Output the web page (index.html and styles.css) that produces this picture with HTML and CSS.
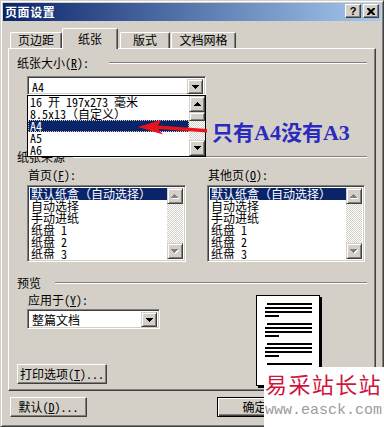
FILE: index.html
```html
<!DOCTYPE html>
<html lang="zh-CN">
<head>
<meta charset="utf-8">
<title>页面设置</title>
<link rel="stylesheet" href="styles.css">
</head>
<body>
<div class="window">
  <div class="titlebar">
    <span class="title">页面设置</span>
    <div class="tb-btns">
      <span class="tb-btn">?</span>
      <span class="tb-btn"><svg width="8" height="7" viewBox="0 0 8 7"><path d="M0 0h2l2 2 2-2h2v1L5.5 3.5 8 6v1H6L4 5 2 7H0V6l2.5-2.5L0 1z"/></svg></span>
    </div>
  </div>
  <div class="main">
    <div class="tabs">
      <div class="tab t1">页边距</div>
      <div class="tab sel t2">纸张</div>
      <div class="tab t3">版式</div>
      <div class="tab t4">文档网格</div>
    </div>
    <div class="panel">
      <div class="group g1"><span class="glabel">纸张大小(<u>R</u>):</span><span class="gline"></span></div>
      <div class="combo c1">
        <span class="ctext">A4</span>
        <span class="sbtn"><svg width="7" height="4"><path d="M0 0h7v1H0zM1 1h5v1H1zM2 2h3v1H2zM3 3h1v1H3z"/></svg></span>
      </div>
      <div class="group g2"><span class="glabel">纸张来源</span><span class="gline"></span></div>
      <div class="sources">
        <div class="src s1">
          <div class="lbl">首页(<u>F</u>):</div>
          <div class="listbox">
            <div class="items">
              <div class="item sel">默认纸盒（自动选择）</div>
              <div class="item">自动选择</div>
              <div class="item">手动进纸</div>
              <div class="item">纸盘 1</div>
              <div class="item">纸盘 2</div>
              <div class="item">纸盘 3</div>
            </div>
            <div class="vscroll">
              <span class="sbtn"><svg width="8" height="5"><path fill="#fff" d="M4 1h1v1H4zM3 2h3v1H3zM2 3h5v1H2zM1 4h7v1H1z"/><path fill="#808080" d="M3 0h1v1H3zM2 1h3v1H2zM1 2h5v1H1zM0 3h7v1H0z"/></svg></span>
              <span class="track"></span>
              <span class="sbtn"><svg width="8" height="5"><path fill="#fff" d="M1 1h7v1H1zM2 2h5v1H2zM3 3h3v1H3zM4 4h1v1H4z"/><path fill="#808080" d="M0 0h7v1H0zM1 1h5v1H1zM2 2h3v1H2zM3 3h1v1H3z"/></svg></span>
            </div>
          </div>
        </div>
        <div class="src s2">
          <div class="lbl">其他页(<u>O</u>):</div>
          <div class="listbox">
            <div class="items">
              <div class="item sel">默认纸盒（自动选择）</div>
              <div class="item">自动选择</div>
              <div class="item">手动进纸</div>
              <div class="item">纸盘 1</div>
              <div class="item">纸盘 2</div>
              <div class="item">纸盘 3</div>
            </div>
            <div class="vscroll">
              <span class="sbtn"><svg width="8" height="5"><path fill="#fff" d="M4 1h1v1H4zM3 2h3v1H3zM2 3h5v1H2zM1 4h7v1H1z"/><path fill="#808080" d="M3 0h1v1H3zM2 1h3v1H2zM1 2h5v1H1zM0 3h7v1H0z"/></svg></span>
              <span class="track"></span>
              <span class="sbtn"><svg width="8" height="5"><path fill="#fff" d="M1 1h7v1H1zM2 2h5v1H2zM3 3h3v1H3zM4 4h1v1H4z"/><path fill="#808080" d="M0 0h7v1H0zM1 1h5v1H1zM2 2h3v1H2zM3 3h1v1H3z"/></svg></span>
            </div>
          </div>
        </div>
      </div>
      <div class="group g3"><span class="glabel">预览</span><span class="gline"></span></div>
      <div class="preview-row">
        <div class="pleft">
          <div class="lbl">应用于(<u>Y</u>):</div>
          <div class="combo c2">
            <span class="ctext">整篇文档</span>
            <span class="sbtn"><svg width="7" height="4"><path d="M0 0h7v1H0zM1 1h5v1H1zM2 2h3v1H2zM3 3h1v1H3z"/></svg></span>
          </div>
          <div class="btn pbtn">打印选项(<u>T</u>)...</div>
        </div>
        <div class="page">
          <div class="para"><i class="ln first"></i><i class="ln"></i><i class="ln"></i><i class="ln short"></i></div>
          <div class="para"><i class="ln first"></i><i class="ln"></i><i class="ln"></i><i class="ln short"></i></div>
          <div class="para"><i class="ln first"></i><i class="ln"></i><i class="ln"></i><i class="ln short"></i></div>
          <div class="para"><i class="ln first"></i><i class="ln"></i><i class="ln"></i><i class="ln short"></i></div>
        </div>
      </div>
    </div>
    <div class="footer">
      <div class="btn fbtn">默认(<u>D</u>)...</div>
      <div class="btn fbtn ok">确定</div>
      <div class="btn fbtn cancel">取消</div>
    </div>
  </div>

  <div class="dropdown">
    <div class="ditems">
      <div class="item">16 开 197x273 毫米</div>
      <div class="item">8.5x13（自定义）</div>
      <div class="item sel focus">A4</div>
      <div class="item">A5</div>
      <div class="item">A6</div>
    </div>
    <div class="vscroll">
      <span class="sbtn"><svg width="7" height="4"><path d="M3 0h1v1H3zM2 1h3v1H2zM1 2h5v1H1zM0 3h7v1H0z"/></svg></span>
      <span class="thumb"></span>
      <span class="track"></span>
      <span class="sbtn"><svg width="7" height="4"><path d="M0 0h7v1H0zM1 1h5v1H1zM2 2h3v1H2zM3 3h1v1H3z"/></svg></span>
    </div>
  </div>

  <svg class="arrow" width="384" height="427" viewBox="0 0 384 427">
    <path fill="#e8141c" d="M138 127 L161 120 L158 125.5 L207 129 L207 132.5 L158 129 L163 134.5 Z"/>
  </svg>
  <div class="note">只有<span class="lat">A4</span>没有<span class="lat">A3</span></div>

  <div class="watermark">
    <div class="wm1">易采站长站</div>
    <div class="wm2">www.easck.com</div>
  </div>
</div>
</body>
</html>
```

FILE: styles.css
```css
* { box-sizing: border-box; }
html, body { margin: 0; padding: 0; }
body {
  width: 384px;
  height: 427px;
  overflow: hidden;
  background: #d4d0c8;
  font-family: "Noto Sans Mono CJK SC", "Noto Sans CJK SC", sans-serif;
  font-size: 12px;
  line-height: 14px;
  color: #000;
}
u { text-decoration: underline; text-underline-offset: 1px; }

.window {
  position: relative;
  width: 384px;
  height: 427px;
  background: #d4d0c8;
  border: 1px solid;
  border-color: #d4d0c8 #404040 #404040 #d4d0c8;
  box-shadow: inset 1px 1px #fff, inset -1px -1px #808080;
  padding: 2px;
  display: flex;
  flex-direction: column;
}

/* title bar */
.titlebar {
  height: 18px;
  flex: none;
  background: linear-gradient(to right, #0a246a, #a6caf0);
  display: flex;
  justify-content: space-between;
  align-items: flex-start;
  padding: 0 2px;
}
.title {
  color: #fff;
  font-family: "Noto Sans CJK SC", sans-serif;
  font-weight: bold;
  font-size: 12px;
  line-height: 18px;
  letter-spacing: 0.6px;
}
.tb-btns { display: flex; gap: 2px; margin-top: 1px; }
.tb-btn {
  width: 16px;
  height: 14px;
  background: #d4d0c8;
  border: 1px solid;
  border-color: #fff #404040 #404040 #fff;
  box-shadow: inset -1px -1px #808080;
  display: flex;
  align-items: center;
  justify-content: center;
  font: bold 11px/12px "Liberation Sans", sans-serif;
}

/* main area */
.main { flex: 1; padding: 0 5px; margin-top: 7px; display: flex; flex-direction: column; }

.tabs { height: 20px; display: flex; align-items: flex-end; padding-left: 2px; }
.tab {
  height: 16px;
  background: #d4d0c8;
  border-top: 1px solid #fff;
  border-left: 1px solid #fff;
  border-right: 1px solid #404040;
  box-shadow: inset -1px 0 #808080;
  border-radius: 2px 2px 0 0;
  text-align: center;
  line-height: 14px;
}
.t1 { width: 52px; }
.t2 { width: 56px; }
.t3 { width: 50px; margin-left: 2px; }
.t4 { width: 65px; margin-left: 1px; }
.tab.sel {
  height: 21px;
  margin-bottom: -1px;
  padding-top: 3px;
  position: relative;
  z-index: 2;
}

.panel {
  position: relative;
  z-index: 1;
  border: 1px solid;
  border-color: #fff #404040 #404040 #fff;
  box-shadow: inset -1px -1px #808080;
  padding: 0 8px 4px 8px;
  display: flex;
  flex-direction: column;
}

.group { display: flex; align-items: center; height: 14px; }
.gline {
  flex: 1;
  height: 2px;
  border-top: 1px solid #808080;
  border-bottom: 1px solid #fff;
}
.g1 { margin-top: 7px; }
.g1 .gline { margin-left: 20px; }
.g2 { margin-top: 55px; }
.g2 .gline { margin-left: 8px; }
.g3 { margin-top: 14px; }
.g3 .gline { margin-left: 14px; }

.sunken {
}
.combo, .listbox {
  background: #fff;
  border: 1px solid;
  border-color: #808080 #fff #fff #808080;
  box-shadow: inset 1px 1px #404040, inset -1px -1px #d4d0c8;
  padding: 2px;
  display: flex;
}
.combo { align-items: stretch; justify-content: space-between; }
.ctext { padding-left: 2px; line-height: 15px; }
.c1 { margin: 6px 0 0 10px; width: 179px; height: 19px; }
.c2 { margin: 2px 0 0 10px; width: 133px; height: 20px; }
.c2 .ctext { line-height: 16px; }

.sbtn {
  width: 16px;
  min-height: 15px;
  flex: none;
  background: #d4d0c8;
  border: 1px solid;
  border-color: #d4d0c8 #404040 #404040 #d4d0c8;
  box-shadow: inset 1px 1px #fff, inset -1px -1px #808080;
  display: flex;
  align-items: center;
  justify-content: center;
}
.sbtn svg { display: block; }

.sources { display: flex; margin-left: 10px; gap: 21px; }
.s1 { width: 159px; }
.s2 { width: 158px; }
.lbl { height: 14px; padding-left: 1px; }
.src .lbl { margin-top: 4px; }
.listbox { margin-top: 3px; height: 77px; }
.items { flex: 1; overflow: hidden; }
.item { height: 12px; line-height: 12px; padding-left: 1px; white-space: nowrap; }
.item.sel { background: #0a246a; color: #fff; }

.vscroll { width: 16px; flex: none; display: flex; flex-direction: column; }
.vscroll .sbtn { height: 16px; }
.track {
  flex: 1;
  background: repeating-conic-gradient(#fff 0 25%, #d4d0c8 0 50%) 0 0 / 2px 2px;
}
.thumb {
  height: 9px;
  flex: none;
  background: #d4d0c8;
  border: 1px solid;
  border-color: #d4d0c8 #404040 #404040 #d4d0c8;
  box-shadow: inset 1px 1px #fff, inset -1px -1px #808080;
}

.preview-row { display: flex; align-items: flex-start; }
.pleft { width: 239px; display: flex; flex-direction: column; align-items: flex-start; }
.pleft .lbl { margin: 3px 0 0 10px; }

.btn {
  height: 20px;
  background: #d4d0c8;
  border: 1px solid;
  border-color: #fff #404040 #404040 #fff;
  box-shadow: inset -1px -1px #808080;
  text-align: center;
  line-height: 18px;
  white-space: nowrap;
}
.pbtn { width: 90px; margin-top: 35px; }

.page {
  margin-top: 5px;
  width: 64px;
  height: 91px;
  background: #fff;
  border: 1px solid #000;
  box-shadow: 2px 2px 0 #000;
  padding: 7px 0 0 8px;
  display: flex;
  flex-direction: column;
  gap: 6px;
}
.para { display: flex; flex-direction: column; gap: 2px; }
.ln { display: block; height: 2px; width: 47px; background: #000; }
.ln.first { width: 45px; margin-left: 2px; }
.ln.short { width: 14px; }

.footer { display: flex; margin-top: 6px; padding-left: 2px; }
.fbtn { width: 77px; }
.ok {
  width: 75px;
  margin-left: 130px;
  border: 1px solid #000;
  box-shadow: inset 1px 1px #fff, inset -1px -1px #404040, inset -2px -2px #808080;
}
.cancel { width: 75px; margin-left: 6px; }

/* overlays */
.dropdown {
  position: absolute;
  left: 26px;
  top: 94px;
  width: 179px;
  height: 62px;
  background: #fff;
  border: 1px solid #000;
  display: flex;
  z-index: 5;
}
.ditems { flex: 1; }
.ditems .item { padding-left: 2px; }
.item.focus { outline: 1px dotted #d8d0a0; outline-offset: -1px; }

.arrow { position: absolute; left: -1px; top: -1px; z-index: 6; pointer-events: none; }

.note {
  position: absolute;
  left: 211px;
  top: 118px;
  z-index: 6;
  color: #2a2abf;
  font-family: "Noto Sans CJK SC", sans-serif;
  font-weight: bold;
  font-size: 21px;
  line-height: 24px;
  white-space: nowrap;
}
.note .lat { font-family: "Liberation Serif", serif; font-size: 22px; }

.watermark {
  position: absolute;
  left: 263px;
  top: 366px;
  right: -1px;
  bottom: -1px;
  background: #fff;
  z-index: 7;
  padding-left: 1px;
}
.wm1 {
  color: #d0143c;
  font-family: "Noto Sans CJK SC", sans-serif;
  font-size: 22px;
  line-height: 26px;
  letter-spacing: 1.4px;
  margin-top: 3px;
}
.wm2 {
  color: #9c9c9c;
  font-family: "Liberation Mono", monospace;
  font-size: 15px;
  line-height: 16px;
  margin-top: 7px;
}
```
